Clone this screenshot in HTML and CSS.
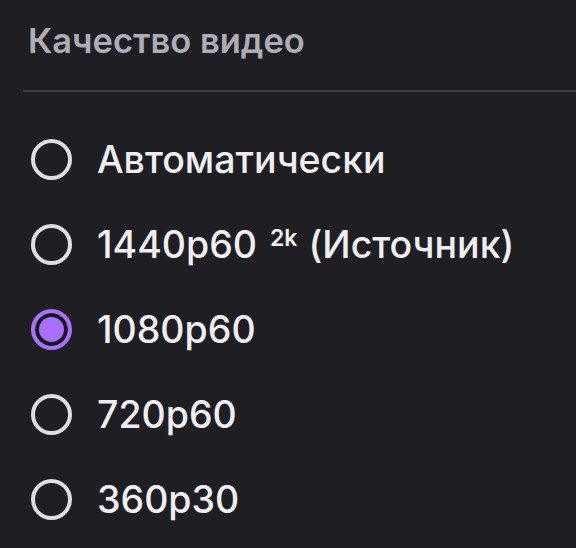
FILE: index.html
```html
<!DOCTYPE html>
<html lang="ru">
<head>
  <meta charset="UTF-8">
  <meta name="viewport" content="width=device-width, initial-scale=1.0">
  <title>Качество видео</title>
  <link rel="stylesheet" href="styles.css">
</head>
<body>
  <div class="quality-menu">
    <div class="menu-title">Качество видео</div>
    <div class="menu-sep"></div>

    <div class="options">
      <label class="option">
        <input type="radio" name="quality" value="auto">
        <span class="radio"></span>
        <span class="option-label">Автоматически</span>
      </label>
      <label class="option">
        <input type="radio" name="quality" value="1440p60">
        <span class="radio"></span>
        <span class="option-label">1440p60<sup class="badge">2k</sup>(Источник)</span>
      </label>
      <label class="option">
        <input type="radio" name="quality" value="1080p60" checked>
        <span class="radio"></span>
        <span class="option-label">1080p60</span>
      </label>
      <label class="option">
        <input type="radio" name="quality" value="720p60">
        <span class="radio"></span>
        <span class="option-label">720p60</span>
      </label>
      <label class="option">
        <input type="radio" name="quality" value="360p30">
        <span class="radio"></span>
        <span class="option-label">360p30</span>
      </label>
    </div>
  </div>
</body>
</html>
```

FILE: styles.css
```css
html, body {
  margin: 0;
  padding: 0;
  background-color: #1f1f23;
}

body {
  font-family: Inter, "Noto Sans", Arial, sans-serif;
  color: #efeff1;
}

.quality-menu {
  width: 576px;
  height: 548px;
  overflow: hidden;
}

.menu-title {
  padding: 19px 0 0 28px;
  height: 71px;
  box-sizing: border-box;
  font-size: 34.5px;
  font-weight: 600;
  color: #adadb8;
  line-height: 44px;
}

.menu-sep {
  margin-left: 23px;
  height: 2px;
  background-color: #3b3b40;
  margin-top: 19px;
}

.options {
  display: flex;
  flex-direction: column;
  padding-top: 25px;
}

.option {
  display: flex;
  align-items: center;
  height: 85px;
  padding-left: 31px;
  cursor: pointer;
}

.option input {
  display: none;
}

.radio {
  width: 41px;
  height: 41px;
  box-sizing: border-box;
  border: 4px solid #dedee3;
  border-radius: 50%;
  flex-shrink: 0;
  margin-right: 25px;
}

.option input:checked + .radio {
  border-color: #a970ff;
  background-color: #a970ff;
  box-shadow: inset 0 0 0 4px #18181b;
}

.option-label {
  font-size: 37.5px;
  font-weight: 500;
  line-height: 44px;
}

.badge {
  font-size: 23px;
  font-weight: 600;
  vertical-align: 12px;
  line-height: 0;
  margin: 0 11px 0 13px;
}
```
